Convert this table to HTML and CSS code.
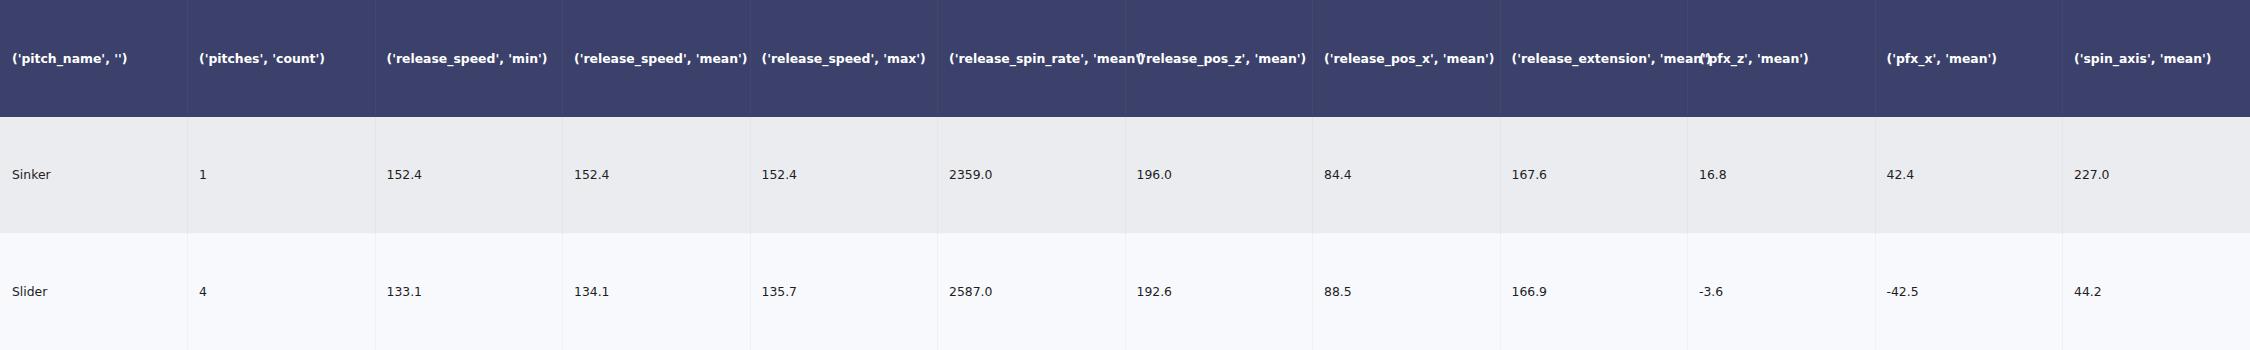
FILE: index.html
```html
<!DOCTYPE html>
<html>
<head>
<meta charset="utf-8">
<link rel="stylesheet" href="styles.css">
</head>
<body>
<table class="table">
  <colgroup>
    <col><col><col><col><col><col><col><col><col><col><col><col>
  </colgroup>
  <tr class="head">
    <th>('pitch_name', '')</th>
    <th>('pitches', 'count')</th>
    <th>('release_speed', 'min')</th>
    <th>('release_speed', 'mean')</th>
    <th>('release_speed', 'max')</th>
    <th>('release_spin_rate', 'mean')</th>
    <th>('release_pos_z', 'mean')</th>
    <th>('release_pos_x', 'mean')</th>
    <th>('release_extension', 'mean')</th>
    <th>('pfx_z', 'mean')</th>
    <th>('pfx_x', 'mean')</th>
    <th>('spin_axis', 'mean')</th>
  </tr>
  <tr class="odd">
    <td>Sinker</td>
    <td>1</td>
    <td>152.4</td>
    <td>152.4</td>
    <td>152.4</td>
    <td>2359.0</td>
    <td>196.0</td>
    <td>84.4</td>
    <td>167.6</td>
    <td>16.8</td>
    <td>42.4</td>
    <td>227.0</td>
  </tr>
  <tr class="even">
    <td>Slider</td>
    <td>4</td>
    <td>133.1</td>
    <td>134.1</td>
    <td>135.7</td>
    <td>2587.0</td>
    <td>192.6</td>
    <td>88.5</td>
    <td>166.9</td>
    <td>-3.6</td>
    <td>-42.5</td>
    <td>44.2</td>
  </tr>
</table>
</body>
</html>
```
FILE: styles.css
```css
html, body {
  margin: 0;
  padding: 0;
  background: #ffffff;
}

.table {
  width: 2250px;
  height: 350px;
  table-layout: fixed;
  border-collapse: collapse;
  border-spacing: 0;
  font-family: "DejaVu Sans", Verdana, sans-serif;
  font-size: 12.4px;
}

.table tr {
  height: 116.66px;
}

.table th,
.table td {
  padding: 0 0 0 11px;
  text-align: left;
  vertical-align: middle;
  white-space: nowrap;
  overflow: visible;
  border-left: 1px solid transparent;
}

.table th:first-child,
.table td:first-child {
  padding-left: 12px;
  border-left: none;
}

.head th {
  background: #3c416b;
  color: #ffffff;
  font-weight: bold;
  border-left-color: #42476f;
}

.odd td {
  background: #ebecf0;
  color: #1e1e1e;
  font-weight: normal;
  border-left-color: #e4e5e9;
}

.even td {
  background: #f8f9fc;
  color: #1e1e1e;
  border-left-color: #f0f1f4;
  border-top: 1px solid #f6f7fa;
}
```
